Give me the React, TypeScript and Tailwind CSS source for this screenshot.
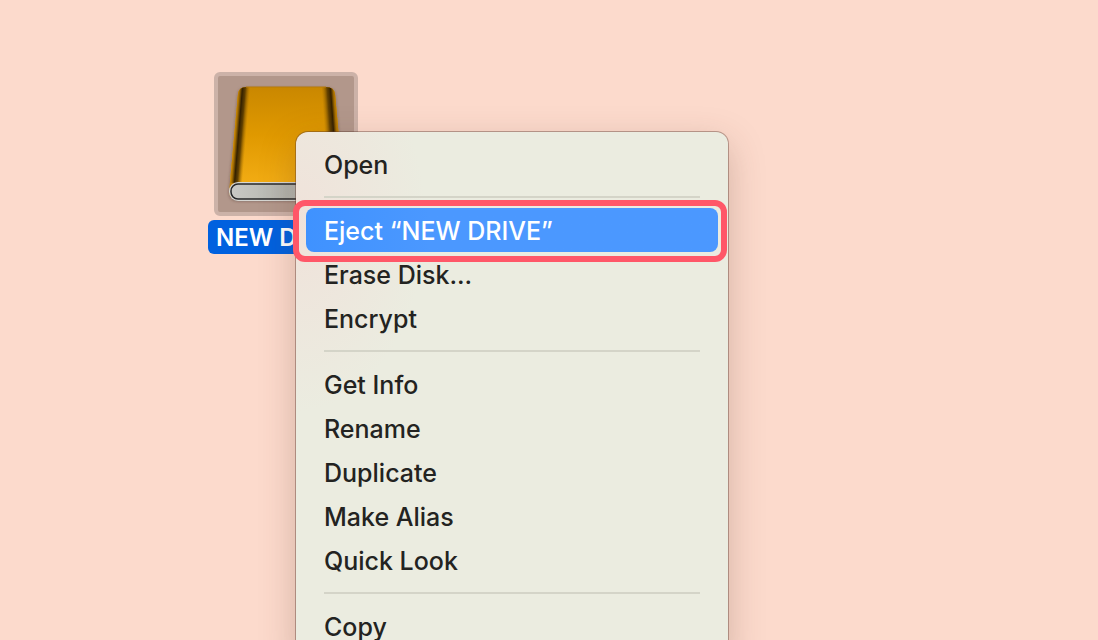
import { Fragment } from 'react'

const groups = [
  ['Open'],
  ['Eject “NEW DRIVE”', 'Erase Disk...', 'Encrypt'],
  ['Get Info', 'Rename', 'Duplicate', 'Make Alias', 'Quick Look'],
  ['Copy'],
];

const selected = 'Eject “NEW DRIVE”';

const DriveIcon = () => {
  return (
    <svg viewBox="0 0 136 136" className="block h-full w-full" aria-hidden="true">
      <defs>
        <linearGradient id="cover" x1="0" y1="0" x2="0" y2="1">
          <stop offset="0" stopColor="#c98700" />
          <stop offset="0.5" stopColor="#e09900" />
          <stop offset="1" stopColor="#f2ac14" />
        </linearGradient>
        <linearGradient id="spine" gradientUnits="userSpaceOnUse" x1="16" y1="62" x2="28" y2="63">
          <stop offset="0" stopColor="#c48408" />
          <stop offset="0.12" stopColor="#a87000" />
          <stop offset="0.35" stopColor="#332000" />
          <stop offset="0.6" stopColor="#4a3000" stopOpacity="0.85" />
          <stop offset="1" stopColor="#a06a00" stopOpacity="0" />
        </linearGradient>
        <linearGradient id="edge" gradientUnits="userSpaceOnUse" x1="121" y1="62" x2="107" y2="63">
          <stop offset="0" stopColor="#c48408" />
          <stop offset="0.15" stopColor="#a87000" />
          <stop offset="0.35" stopColor="#332000" />
          <stop offset="0.6" stopColor="#4a3000" stopOpacity="0.8" />
          <stop offset="1" stopColor="#a06a00" stopOpacity="0" />
        </linearGradient>
        <linearGradient id="pages" x1="0" y1="0" x2="1" y2="0">
          <stop offset="0" stopColor="#c9c9c5" />
          <stop offset="0.5" stopColor="#b2b3ac" />
          <stop offset="1" stopColor="#c9c9c5" />
        </linearGradient>
        <filter id="shade" x="-20%" y="-20%" width="140%" height="140%">
          <feDropShadow dx="0" dy="1" stdDeviation="1.5" floodColor="#3b2a20" floodOpacity="0.5" />
        </filter>
        <clipPath id="body">
          <path d="M28 11 H108 Q116 11 117 18 L125 107 H12 L20 18 Q21 11 28 11 Z" />
        </clipPath>
      </defs>
      <path
        d="M28 11 H108 Q116 11 117 18 L125 107 V116 Q124 124 116 124 H20 Q12 124 11 116 L12 106 L20 18 Q21 11 28 11 Z"
        fill="#c48408"
        filter="url(#shade)"
      />
      <g clipPath="url(#body)">
        <rect x="10" y="10" width="118" height="98" fill="url(#cover)" />
        <path d="M20 10 H34 L25 108 H10 Z" fill="url(#spine)" />
        <path d="M101 10 H118 L128 108 H110 Z" fill="url(#edge)" />
      </g>
      <path d="M28 11 H108" stroke="#b87c08" strokeWidth="1" />
      <rect x="11" y="106" width="115" height="19" rx="9" fill="#d6d6d2" />
      <rect x="13" y="108" width="111" height="15" rx="7" fill="url(#pages)" stroke="#262729" strokeWidth="1.5" />
    </svg>
  )
}

const App = () => {
  return (
    <main className="relative h-screen overflow-hidden bg-[#fcdacc] pl-[208px] pt-[72px] font-[Inter,'Liberation_Sans',sans-serif]">
      <figure className="flex w-[156px] flex-col items-center gap-1">
        <div className="size-36 rounded-md border-4 border-[#ccb2a8] bg-[#b2978b]">
          <DriveIcon />
        </div>
        <figcaption className="flex h-[34px] w-full items-center overflow-hidden whitespace-nowrap rounded-md bg-[#0061df] px-2 pt-0.5 text-2xl font-semibold text-white">
          NEW DRIVE
        </figcaption>
      </figure>

      <div
        role="menu"
        className="absolute left-[296px] top-[132px] w-[432px] rounded-xl bg-[#ebece0] bg-[radial-gradient(ellipse_130px_190px_at_0_90px,#f0e2da,#ebece0)] p-[10px] text-[25px] font-[450] text-[#232321] shadow-[0_0_0_1px_rgba(90,55,45,0.4),0_12px_36px_rgba(90,55,40,0.26)]"
      >
        {groups.map((group, i) => (
          <Fragment key={i}>
            {i > 0 && <hr className="mx-[18px] my-[10px] border-t-2 border-[#d4d4c8]" />}
            {group.map((label) => (
              <div key={label} className="relative">
                <button
                  type="button"
                  role="menuitem"
                  className={
                    label === selected
                      ? 'flex h-11 w-full items-center rounded-lg bg-linear-to-r from-[#3f92ff] to-[#4b98ff] to-30% px-[18px] pt-1 text-white'
                      : 'flex h-11 w-full items-center rounded-lg px-[18px] pt-1'
                  }
                >
                  {label}
                </button>
                {label === selected && (
                  <span className="pointer-events-none absolute -left-[13px] -right-[9px] -top-2 -bottom-[10px] z-10 rounded-xl border-6 border-[#ff5768]" />
                )}
              </div>
            ))}
          </Fragment>
        ))}
      </div>
    </main>
  )
}

export default App
